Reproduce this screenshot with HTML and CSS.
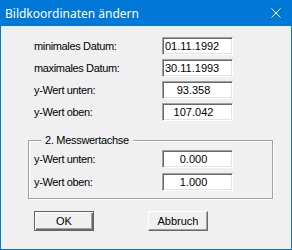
FILE: index.html
```html
<!DOCTYPE html>
<html>
<head>
<meta charset="utf-8">
<link rel="stylesheet" href="styles.css">
</head>
<body>
<div class="window">
  <div class="titlebar">
    <span class="title">Bildkoordinaten ändern</span>
    <svg class="close" width="10" height="10" viewBox="0 0 10 10"><path d="M0.5 0.5 L9.5 9.5 M9.5 0.5 L0.5 9.5" stroke="#fff" stroke-width="1" fill="none"/></svg>
  </div>
  <div class="content">
    <div class="fields">
      <label class="lbl">minimales Datum:</label>
      <input class="box left" type="text" value="01.11.1992" readonly>
      <label class="lbl">maximales Datum:</label>
      <input class="box left" type="text" value="30.11.1993" readonly>
      <label class="lbl">y-Wert unten:</label>
      <input class="box num" type="text" value="93.358" readonly>
      <label class="lbl">y-Wert oben:</label>
      <input class="box num" type="text" value="107.042" readonly>
    </div>
    <div class="group">
      <div class="group-title">2. Messwertachse</div>
      <div class="fields group-fields">
        <label class="lbl">y-Wert unten:</label>
        <input class="box num" type="text" value="0.000" readonly>
        <label class="lbl">y-Wert oben:</label>
        <input class="box num" type="text" value="1.000" readonly>
      </div>
    </div>
    <div class="buttons">
      <button class="btn default">OK</button>
      <button class="btn">Abbruch</button>
    </div>
  </div>
</div>
</body>
</html>
```
FILE: styles.css
```css
html, body {
  margin: 0;
  padding: 0;
  background: #f0f0f0;
}
.window {
  width: 292px;
  height: 250px;
  box-sizing: border-box;
  border: 1px solid #0078d7;
  border-top: 0;
  background: #f0f0f0;
  font-family: "Liberation Sans", Arial, sans-serif;
  font-size: 11px;
  color: #000;
}
.titlebar {
  height: 26px;
  background: #0078d7;
  color: #fff;
  display: flex;
  align-items: center;
  justify-content: space-between;
  padding: 0 10px 0 4px;
  font-family: "Noto Sans", sans-serif;
  font-size: 12px;
}
.close {
  display: block;
}
.content {
  padding: 11px 0 0 33px;
}
.fields {
  display: grid;
  grid-template-columns: 128px 71px;
  grid-auto-rows: 18px;
  row-gap: 4px;
  align-items: center;
}
.lbl {
  line-height: 13px;
  letter-spacing: -0.35px;
}
.box {
  width: 71px;
  height: 18px;
  box-sizing: border-box;
  margin: 0;
  font-family: "Liberation Sans", Arial, sans-serif;
  font-size: 11px;
  color: #000;
  background: #fff;
  border-style: solid;
  border-width: 1px;
  border-color: #a0a0a0 #fff #fff #a0a0a0;
  box-shadow: inset 1px 1px 0 #696969, inset -1px -1px 0 #e3e3e3;
  outline: none;
}
.box.left {
  padding: 0 0 0 2px;
  text-align: left;
}
.box.num {
  padding: 0 8px 0 0;
  text-align: center;
}
.group {
  margin: 19px 0 0 -6px;
  width: 245px;
  box-sizing: border-box;
  border: 1px solid #a0a0a0;
  box-shadow: 1px 1px 0 #fff, inset 1px 1px 0 #fff;
  padding: 0 0 7px 5px;
}
.group-title {
  width: fit-content;
  margin: -7px 0 0 7px;
  padding: 0 4px;
  background: #f0f0f0;
  line-height: 13px;
  letter-spacing: -0.3px;
}
.group-fields {
  margin-top: 3px;
  row-gap: 5px;
}
.buttons {
  display: flex;
  gap: 54px;
  margin-top: 12px;
}
.btn {
  width: 60px;
  height: 20px;
  box-sizing: border-box;
  margin: 0;
  padding: 0;
  font-family: "Liberation Sans", Arial, sans-serif;
  font-size: 11px;
  color: #000;
  background: #f0f0f0;
  border: 1px solid;
  border-color: #fff #696969 #696969 #fff;
  box-shadow: inset -1px -1px 0 #a0a0a0;
}
.btn.default {
  border-color: #646464;
  box-shadow: inset 1px 1px 0 #fff, inset -1px -1px 0 #696969, inset -2px -2px 0 #a0a0a0;
}
```
